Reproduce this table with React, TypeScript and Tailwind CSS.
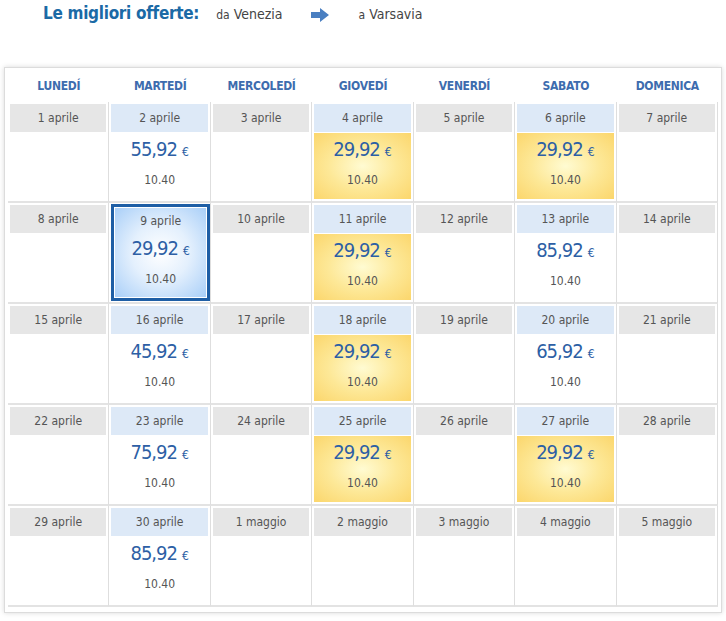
import React from "react";

type Cell = {
  label: string;
  price?: string;
  kind?: "none" | "blue" | "yellow" | "selected";
};

const rows: Cell[][] = [
  [
    { label: "1 aprile" },
    { label: "2 aprile", price: "55,92", kind: "blue" },
    { label: "3 aprile" },
    { label: "4 aprile", price: "29,92", kind: "yellow" },
    { label: "5 aprile" },
    { label: "6 aprile", price: "29,92", kind: "yellow" },
    { label: "7 aprile" },
  ],
  [
    { label: "8 aprile" },
    { label: "9 aprile", price: "29,92", kind: "selected" },
    { label: "10 aprile" },
    { label: "11 aprile", price: "29,92", kind: "yellow" },
    { label: "12 aprile" },
    { label: "13 aprile", price: "85,92", kind: "blue" },
    { label: "14 aprile" },
  ],
  [
    { label: "15 aprile" },
    { label: "16 aprile", price: "45,92", kind: "blue" },
    { label: "17 aprile" },
    { label: "18 aprile", price: "29,92", kind: "yellow" },
    { label: "19 aprile" },
    { label: "20 aprile", price: "65,92", kind: "blue" },
    { label: "21 aprile" },
  ],
  [
    { label: "22 aprile" },
    { label: "23 aprile", price: "75,92", kind: "blue" },
    { label: "24 aprile" },
    { label: "25 aprile", price: "29,92", kind: "yellow" },
    { label: "26 aprile" },
    { label: "27 aprile", price: "29,92", kind: "yellow" },
    { label: "28 aprile" },
  ],
  [
    { label: "29 aprile" },
    { label: "30 aprile", price: "85,92", kind: "blue" },
    { label: "1 maggio" },
    { label: "2 maggio" },
    { label: "3 maggio" },
    { label: "4 maggio" },
    { label: "5 maggio" },
  ],
];

const days = ["LUNEDÍ", "MARTEDÍ", "MERCOLEDÍ", "GIOVEDÍ", "VENERDÍ", "SABATO", "DOMENICA"];

function Price({ price }: { price: string }) {
  return (
    <div className="flex flex-col items-center pt-[4px]">
      <div className="leading-[24px] text-[#2d5fa5]">
        <span className="text-[20px] tracking-[-1px]">{price}</span>
        <span className="text-[12px] ml-[5px]">€</span>
      </div>
      <div className="mt-[8px] leading-[16px] text-[12px] text-[#555]">10.40</div>
    </div>
  );
}

function DayCell({ cell }: { cell: Cell }) {
  const kind = cell.kind ?? "none";
  if (kind === "selected") {
    return (
      <div className="border-r border-r-[#dedede] border-b-2 border-b-[#e3e3e3] pl-[2px] pr-0 pt-[1px] pb-[1px] h-[101px]">
        <div className="h-full border-[3px] border-[#1e5ea5]">
          <div className="h-full border border-white bg-[radial-gradient(ellipse_at_center,#ffffff_0%,#e4f0fd_45%,#a9cff8_100%)]">
            <div className="h-[25px] flex items-center justify-center text-[12px] text-[#555]">
              {cell.label}
            </div>
            <div className="-mt-[1px]">
              <Price price={cell.price!} />
            </div>
          </div>
        </div>
      </div>
    );
  }
  return (
    <div className="border-r border-r-[#dedede] border-b-2 border-b-[#e3e3e3] px-[2px] pt-[2px] h-[101px] flex flex-col">
      <div
        className={
          "h-[28px] flex items-center justify-center text-[12px] text-[#555] " +
          (kind === "none" ? "bg-[#e6e6e6]" : "bg-[#dde9f7]")
        }
      >
        {cell.label}
      </div>
      {kind === "yellow" ? (
        <div className="mt-[1px] h-[66px] bg-[radial-gradient(ellipse_at_center,#fffbd2_0%,#fde897_50%,#fbd66c_100%)]">
          <Price price={cell.price!} />
        </div>
      ) : kind === "blue" ? (
        <div className="mt-[1px] h-[66px]">
          <Price price={cell.price!} />
        </div>
      ) : null}
    </div>
  );
}

export default function App() {
  return (
    <div
      className="w-[726px] h-[621px] bg-white overflow-hidden"
      style={{ fontFamily: "'DejaVu Sans Condensed', 'DejaVu Sans', sans-serif" }}
    >
      <div className="h-[28px] flex items-baseline pl-[43px] pt-[1px]">
        <span className="text-[17px] font-bold text-[#1b6aa6] tracking-[-0.3px]">Le migliori offerte:</span>
        <span className="ml-[17px] text-[12px] text-[#444]">da</span>
        <span className="ml-[4px] text-[14px] text-[#444]">Venezia</span>
        <svg className="ml-[28px] self-center" width="18" height="14" viewBox="0 0 18 14">
          <path d="M0 4 H9 V0 L18 7 L9 14 V10 H0 Z" fill="#4a7fc1" />
        </svg>
        <span className="ml-[30px] text-[12px] text-[#444]">a</span>
        <span className="ml-[4px] text-[14px] text-[#444]">Varsavia</span>
      </div>
      <div className="mt-[39px] ml-[4px] w-[718px] h-[546px] border border-[#dcdcdc] bg-white shadow-[0_0_5px_rgba(0,0,0,0.15)] px-[3px] pb-[5px]">
        <div className="grid grid-cols-7 h-[34px] items-center pt-[2px]">
          {days.map((d) => (
            <div key={d} className="text-center text-[12px] font-bold text-[#3d6cae] tracking-[-0.3px]">
              {d}
            </div>
          ))}
        </div>
        <div className="grid grid-cols-7">
          {rows.flat().map((c, i) => (
            <DayCell key={i} cell={c} />
          ))}
        </div>
      </div>
    </div>
  );
}
